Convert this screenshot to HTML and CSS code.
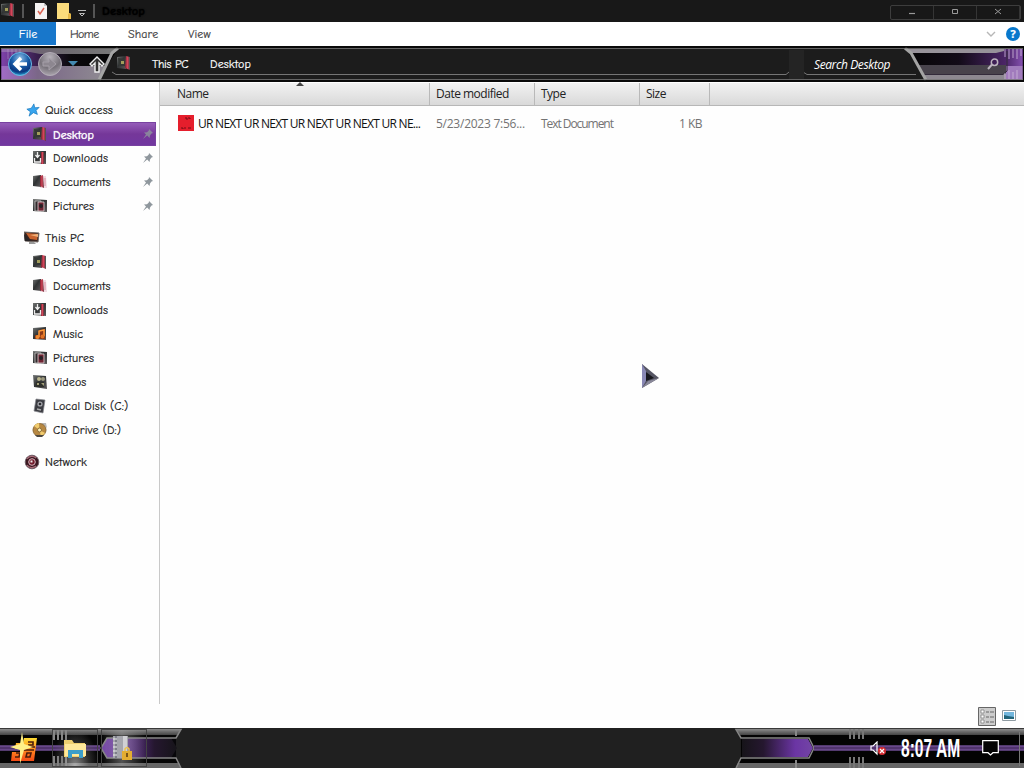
FILE: index.html
```html
<!DOCTYPE html>
<html lang="en" dir="ltr">
  <head>
    <meta charset="utf-8">
    <title>Desktop</title>
    <meta name="viewport" content="width=device-width, initial-scale=1.0">
    <link rel="stylesheet" href="styles.css">
  </head>
  <body>
    <svg class="defs" width="0" height="0">
      <defs>
        <linearGradient id="dark" x1="0" y1="0" x2="1" y2="1">
          <stop offset="0" stop-color="#747675"/>
          <stop offset=".45" stop-color="#303334"/>
          <stop offset="1" stop-color="#5d595b"/>
        </linearGradient>
        <linearGradient id="red" x1="0" y1="0" x2="1" y2="0">
          <stop offset="0" stop-color="#7e1c2c"/>
          <stop offset=".5" stop-color="#d2465a"/>
          <stop offset="1" stop-color="#5b3036"/>
        </linearGradient>
        <linearGradient id="bar" x1="0" y1="0" x2="0" y2="1">
          <stop offset="0" stop-color="#8a8a8a"/>
          <stop offset="1" stop-color="#444"/>
        </linearGradient>
        <linearGradient id="navTop" x1="0" y1="0" x2="1" y2="0">
          <stop offset="0" stop-color="#9a72b8"/>
          <stop offset=".3" stop-color="#777079"/>
          <stop offset="1" stop-color="#8d8d8d"/>
        </linearGradient>
        <linearGradient id="navLeft" x1="0" y1="0" x2="1" y2="0">
          <stop offset="0" stop-color="#7f43aa"/>
          <stop offset=".3" stop-color="#3a2050"/>
          <stop offset=".6" stop-color="#0b090c"/>
          <stop offset="1" stop-color="#050505"/>
        </linearGradient>
        <linearGradient id="navLow" x1="0" y1="0" x2="1" y2="0">
          <stop offset="0" stop-color="#a06cc6"/>
          <stop offset=".35" stop-color="#7b6788"/>
          <stop offset="1" stop-color="#8f8b92"/>
        </linearGradient>
        <linearGradient id="navRight" x1="0" y1="0" x2="1" y2="0">
          <stop offset="0" stop-color="#060606"/>
          <stop offset=".45" stop-color="#120b18"/>
          <stop offset=".85" stop-color="#4b2567"/>
          <stop offset="1" stop-color="#8550b0"/>
        </linearGradient>
        <linearGradient id="purple" x1="0" y1="0" x2="1" y2="0">
          <stop offset="0" stop-color="#161419"/>
          <stop offset=".3" stop-color="#25172f"/>
          <stop offset=".75" stop-color="#6b35a4"/>
          <stop offset="1" stop-color="#7345a5"/>
        </linearGradient>
        <radialGradient id="blue" cx=".5" cy=".25" r=".8">
          <stop offset="0" stop-color="#8dbbe5"/>
          <stop offset=".45" stop-color="#185da8"/>
          <stop offset=".75" stop-color="#0a3780"/>
          <stop offset="1" stop-color="#32c8f0"/>
        </radialGradient>
        <radialGradient id="grey" cx=".5" cy=".2" r=".8">
          <stop offset="0" stop-color="#b6b1b9"/>
          <stop offset=".6" stop-color="#77727a"/>
          <stop offset="1" stop-color="#aaa4ad"/>
        </radialGradient>
        <linearGradient id="fire" x1="0" y1="0" x2="0" y2="1">
          <stop offset="0" stop-color="#ffde35"/>
          <stop offset=".5" stop-color="#ff8a20"/>
          <stop offset="1" stop-color="#f44b16"/>
        </linearGradient>

        <symbol id="i-desktop" viewBox="0 0 16 16">
          <path d="M1 2 10 1V14L1 13z" fill="url(#dark)"/>
          <path d="M10 1 14 2V15L9 13z" fill="url(#red)"/>
          <path d="M2 3 9 4V11H3z" fill="#343735"/>
          <path d="M5 6h3v3H5z" fill="#a29d5b"/>
          <path d="M13.500 2v12" stroke="#555"/>
        </symbol>
        <symbol id="i-down" viewBox="0 0 16 16">
          <path d="M1 1H14V14L1 13z" fill="url(#dark)"/>
          <path d="M9 2h3v12H9z" fill="url(#red)"/>
          <path d="M5.500 2v5M3.500 5l2 2.500 2-2.500M2.500 8v4h6V8" fill="none" stroke="#eee" stroke-width="1.300"/>
        </symbol>
        <symbol id="i-doc" viewBox="0 0 16 16">
          <path d="M10 2h4l1 12H8z" fill="#f2dce3"/>
          <path d="M1 2 9 1V13L1 12z" fill="url(#dark)"/>
          <path d="M8 2 11 1 12 14 8 12z" fill="url(#red)"/>
          <path d="M13 4v8" stroke="#d993a4"/>
        </symbol>
        <symbol id="i-pic" viewBox="0 0 16 16">
          <path d="M1 1 15 2V14L1 13z" fill="url(#dark)"/>
          <path d="M3 3h6v10H3z" fill="#332a2d" stroke="#c9c8c6" stroke-width=".8"/>
          <path d="M6 4h6v9H6z" fill="#6e2432" stroke="#ddd4d4" stroke-width=".8"/>
          <circle cx="9" cy="8" r="2" fill="#252025"/>
        </symbol>
        <symbol id="i-music" viewBox="0 0 16 16">
          <path d="M1 2 14 1V14L1 13z" fill="url(#dark)"/>
          <path d="M7 4 13 3V13H3V9h4z" fill="#8c3817"/>
          <path d="M7 11V5l5-1v6" fill="none" stroke="#ff9b3a" stroke-width="1.500"/>
          <circle cx="5.500" cy="11" r="2" fill="#f18a31"/>
          <circle cx="10.500" cy="10.500" r="2" fill="#e07124"/>
        </symbol>
        <symbol id="i-video" viewBox="0 0 16 16">
          <path d="M1 1 14 2 15 15 2 13z" fill="url(#dark)"/>
          <circle cx="7" cy="5" r="2" fill="#b9b48b"/>
          <circle cx="11" cy="5" r="2" fill="#9a967c"/>
          <path d="M4 8h8v5H4z" fill="#2f302b"/>
          <path d="M5 9h2v2H5zM9 9h3v3z" fill="#a3a07b"/>
        </symbol>
        <symbol id="i-disk" viewBox="0 0 16 16">
          <path d="M4 1 13 2 11 15 2 13z" fill="#3b3c42" stroke="#87888e" stroke-width=".7"/>
          <circle cx="8" cy="6" r="2.600" fill="#a5a6ab"/>
          <circle cx="8" cy="6" r="1.300" fill="#292a2f"/>
          <path d="M5 11 9 12" stroke="#aaa" stroke-width="1.500"/>
        </symbol>
        <symbol id="i-cd" viewBox="0 0 16 16">
          <path d="M9 1h5l1 5z" fill="#b7b7b7"/>
          <circle cx="7.500" cy="8" r="6.500" fill="#b78842" stroke="#8d6a36"/>
          <path d="M7.500 8 2 4a7 7 0 0 1 5-3zM7.500 8l5.500 3-4 4z" fill="#f1cc6e"/>
          <circle cx="7.500" cy="8" r="2" fill="#fff1b5" stroke="#8b6c38"/>
          <path d="M3 13h9l-2 2H5z" fill="#4d4942"/>
        </symbol>
        <symbol id="i-pc" viewBox="0 0 16 16">
          <path d="M0 2 15 3 14 12 1 11z" fill="#3b2520" stroke="#706864"/>
          <path d="M2 3 14 4 13 10 6 9z" fill="#c9642f"/>
          <path d="M6 5 14 4V7z" fill="#efb27a"/>
          <path d="M0 4 7 11 1 11z" fill="#282426"/>
          <path d="M5 12h5l2 2H5z" fill="#999"/>
        </symbol>
        <symbol id="i-net" viewBox="0 0 16 16">
          <circle cx="8" cy="8" r="6.800" fill="#3c1821" stroke="#706069"/>
          <path d="M3 5a6 6 0 0 1 9-1M3 11a6 6 0 0 0 9 1" fill="none" stroke="#a96d79" stroke-width="1.200"/>
          <circle cx="8" cy="8" r="3.300" fill="#711c2c" stroke="#d9b6bf"/>
          <path d="M6.500 6.500h2v2h-2z" fill="#eee"/>
        </symbol>
        <symbol id="i-star" viewBox="0 0 16 16">
          <path d="M9 1 10 5.500 15 5 11.500 8.500 13 13 8.500 11 3.500 15 5 10 1 7 6 6z" fill="#38a5ee" stroke="#1879be" stroke-width=".8"/>
        </symbol>
        <symbol id="i-pin" viewBox="0 0 12 12">
          <path d="M7 1 11 5 9.500 5.500 8 7.500 7.500 10 5.200 7.600 1 11 4 6.500 2 4.500 5 4.200 6.800 2.500z" fill="#8f979d"/>
        </symbol>
      </defs>
    </svg>

    <div class="window">
      <header class="titlebar">
        <svg class="app-icon"><use href="#i-desktop"/></svg>
        <span class="sep"></span>
        <svg class="check" viewBox="0 0 12 16"><path d="M0 0h9l3 3v13H0z" fill="#f4f2f1"/><path d="M9 0v3h3" fill="#c7c7c7"/><path d="m3 8 2 3 4-6" fill="none" stroke="#dc6252" stroke-width="1.500"/></svg>
        <svg class="note" viewBox="0 0 14 16"><path d="M0 0h12v10l2 1v5H0z" fill="#fbdc7c"/><path d="M11 16v-5l1.500-1 1.500 1v5z" fill="#e5b847"/></svg>
        <svg class="custom" viewBox="0 0 8 7"><path d="M0 .5h8M1.500 3.500h5L4 6z" fill="none" stroke="#bbb"/></svg>
        <span class="sep second"></span>
        <span class="title comic">Desktop</span>
        <div class="controls">
          <span><svg viewBox="0 0 10 10"><path d="M2 6.500h6" stroke="#999" stroke-width="1.200"/></svg></span>
          <span><svg viewBox="0 0 10 10"><path d="M2.500 2.500h5v4h-5z" fill="none" stroke="#999"/></svg></span>
          <span><svg viewBox="0 0 10 10"><path d="m2 2 6 5M8 2 2 7" stroke="#999"/></svg></span>
        </div>
      </header>

      <nav class="ribbon comic">
        <span class="tab active">File</span>
        <span class="tab home">Home</span>
        <span class="tab share">Share</span>
        <span class="tab view">View</span>
        <svg class="chevron" viewBox="0 0 10 6"><path d="m1 1 4 4 4-4" fill="none" stroke="#b7b7b7" stroke-width="1.400"/></svg>
        <span class="help">?</span>
      </nav>

      <div class="address">
        <svg class="backdrop" viewBox="0 0 1024 36">
          <path d="M0 0h1024v36H0z" fill="#1c1c1c"/>
          <path d="M1 3H118L98 34H1z" fill="url(#navLeft)"/>
          <path d="M1 3H115L113 8H40L30 6H1z" fill="url(#navTop)" opacity=".85"/>
          <path d="M1 20H106L98 34H1z" fill="url(#navLow)"/>
          <path d="M118 2 112 7 99 34" fill="none" stroke="#a4a4a4" stroke-width="3"/>
          <path d="M8 3v10M12 3v8M16 3v10M20 3v7" stroke="#c4a5d8" opacity=".45"/>
          <path d="M112 26 116 28.500H786L789 26M803 26 807 28.500H916" fill="none" stroke="#757575"/>
          <path d="M789 4h15v29h-15z" fill="#242424"/>
          <path d="M906 3H1023V34H926z" fill="url(#navRight)"/>
          <path d="M908 3H1004V5L996 7H911z" fill="#97929a"/>
          <path d="M918 19H1006V28H923z" fill="#48434c"/>
          <path d="M923 28H1006V34H927z" fill="#8d8991"/>
          <path d="M1006 20H1023V34H1006z" fill="#a17bbd"/>
          <path d="M1007 5V25L1003 28.500H924" fill="none" stroke="#332b3b"/>
          <path d="M1005 3v8M1009 3v10M1013 3v9M1017 3v10M1021 3v7M1005 27v6M1009 24v9M1013 26v7M1017 24v9" stroke="#cbb6d9" stroke-width="1.300" opacity=".65"/>
          <path d="M905 2 911 7 926 34" fill="none" stroke="#a4a4a4" stroke-width="3"/>
          <path d="M0 1H1024M0 35H1024M.500 1V35M1023.500 1V35" stroke="#050505" stroke-width="1.500"/>
          <path d="M1 2.500H1023M1 33.500H1023" stroke="#777" stroke-width=".8"/>
        </svg>
        <div class="address-content">
          <svg class="back" viewBox="0 0 26 26"><circle cx="13" cy="13" r="11.500" fill="url(#blue)" stroke="#6dbce5"/><path d="m14 7-6 6 6 6M8 13h12" fill="none" stroke="#fff" stroke-width="3.500"/></svg>
          <svg class="forward" viewBox="0 0 26 26"><circle cx="13" cy="13" r="11.500" fill="url(#grey)" stroke="#b4adb8"/><path d="m12 7 7 6-7 6v-4H6v-4h6z" fill="#8d8790" stroke="#a59fa8"/></svg>
          <svg class="recent" viewBox="0 0 10 6"><path d="M0 0h10L5 5z" fill="#4489b0"/></svg>
          <svg class="up" viewBox="0 0 16 17"><path d="m8 1 7 7-2 2-3-3v9H6V7l-3 3-2-2z" fill="#333" stroke="#eee" stroke-width="1.400"/></svg>
          <svg class="place"><use href="#i-desktop"/></svg>
          <span class="crumb comic">This PC</span>
          <span class="crumb comic last">Desktop</span>
          <span class="search">Search Desktop</span>
          <svg class="lens" viewBox="0 0 12 12"><circle cx="7.500" cy="4.200" r="3.200" fill="none" stroke="#bbb3bd" stroke-width="1.500"/><path d="M5 6.500 1 11" stroke="#bbb3bd" stroke-width="2"/></svg>
        </div>
      </div>

      <div class="main">
        <aside class="sidebar comic">
          <div class="row root star"><svg><use href="#i-star"/></svg><span>Quick access</span></div>
          <div class="row selected"><svg><use href="#i-desktop"/></svg><span>Desktop</span><svg class="pin"><use href="#i-pin"/></svg></div>
          <div class="row"><svg><use href="#i-down"/></svg><span>Downloads</span><svg class="pin"><use href="#i-pin"/></svg></div>
          <div class="row"><svg><use href="#i-doc"/></svg><span>Documents</span><svg class="pin"><use href="#i-pin"/></svg></div>
          <div class="row"><svg><use href="#i-pic"/></svg><span>Pictures</span><svg class="pin"><use href="#i-pin"/></svg></div>
          <div class="row root group"><svg><use href="#i-pc"/></svg><span>This PC</span></div>
          <div class="row"><svg><use href="#i-desktop"/></svg><span>Desktop</span></div>
          <div class="row"><svg><use href="#i-doc"/></svg><span>Documents</span></div>
          <div class="row"><svg><use href="#i-down"/></svg><span>Downloads</span></div>
          <div class="row"><svg><use href="#i-music"/></svg><span>Music</span></div>
          <div class="row"><svg><use href="#i-pic"/></svg><span>Pictures</span></div>
          <div class="row"><svg><use href="#i-video"/></svg><span>Videos</span></div>
          <div class="row"><svg><use href="#i-disk"/></svg><span>Local Disk (C:)</span></div>
          <div class="row"><svg><use href="#i-cd"/></svg><span>CD Drive (D:)</span></div>
          <div class="row root group"><svg><use href="#i-net"/></svg><span>Network</span></div>
        </aside>
        <section class="files">
          <div class="columns head">
            <span class="name">Name</span><span>Date modified</span><span>Type</span><span>Size</span>
            <i class="sort"></i>
          </div>
          <div class="columns file">
            <span class="name">
              <svg class="file-icon" viewBox="0 0 16 16"><path d="M0 0h16v16H0z" fill="#e51e2c"/><path d="M7 3h2v2M10 3h2v1M3 13h2v1M6 13h2M10 13h3" fill="none" stroke="#710c14"/></svg>
              <b>UR NEXT UR NEXT UR NEXT UR NEXT UR NE...</b>
            </span>
            <span class="modified">5/23/2023 7:56...</span><span class="type">Text Document</span><span class="size">1 KB</span>
          </div>
          <div class="views">
            <svg class="details" viewBox="0 0 18 19"><path d="M.5.5h17v18H.5z" fill="#ccc" stroke="#666"/><path d="M3 3h3v3H3zM3 8h3v3H3zM3 13h3v3H3z" fill="#fff" stroke="#777" stroke-width=".7"/><path d="M8 5h3m1 0h4M8 10h3m1 0h4M8 15h3m1 0h4" stroke="#666"/></svg>
            <svg class="thumbs" viewBox="0 0 14 11"><path d="M.5.500h13v10H.5z" fill="#fff" stroke="#8f9ba2"/><path d="M2 2h10v7H2z" fill="#72b6dd"/><path d="m2 5 4 1 6 1v2H2z" fill="#21647a"/></svg>
          </div>
        </section>
      </div>

      <footer class="taskbar">
        <svg class="backdrop" viewBox="0 0 1024 40">
          <path d="M0 0h1024v40H0z" fill="#202020"/>
          <path d="M0 1H181L176 10V30L181 40H0z" fill="#050505"/>
          <path d="M0 1H181L178 7H0z" fill="url(#bar)"/>
          <path d="M0 35H179L181 40H0z" fill="#666"/>
          <path d="M0 20H102" stroke="#51346e" stroke-width="5"/>
          <path d="M0 18H102M0 22H102" stroke="#7e5aa5"/>
          <path d="M101 20 107 10H176V30H107z" fill="url(#purple)" transform="matrix(-1 0 0 1 277 0)"/>
          <path d="M101 20 107 10H176V30H107z" fill="#08070a"/>
          <path d="M0 20 6 10H75V30H6z" fill="url(#purple)" transform="matrix(-1 0 0 1 177 0)"/>
          <path d="M101 20 107 10V30z" fill="#7345a5"/>
          <path d="M100 10 107 10 101 20 107 30 100 30z" fill="#050505"/>
          <path d="M0 1.500H181L176 10H107L101 20 107 30H176L181 40" fill="none" stroke="#858585" stroke-width="1.500"/>
          <path d="M736 1H1024V40H736L741 30V10z" fill="#030303"/>
          <path d="M736 1H1024V7H740z" fill="url(#bar)"/>
          <path d="M738 35H1024V40H736z" fill="#666"/>
          <path d="M1024 1.500H736L741 10H809L814 20L809 30H741L736 40" fill="none" stroke="#858585" stroke-width="1.500"/>
          <path d="M742 11H808L813 20 808 29H742z" fill="url(#purple)"/>
          <path d="M814 20H1024" stroke="#51346e" stroke-width="5"/>
          <path d="M814 18H1024M814 22H1024" stroke="#7e5aa5"/>
          <path d="M850 1v10M854 1v10M859 1v10M863 1v10M850 29v11M854 29v11M859 29v11M863 29v11" stroke="#777" stroke-width="2"/>
          <path d="M796 1v7M796 32v8" stroke="#888" stroke-width="2"/>
          <path d="M1019.500 4v34" stroke="#777"/>
        </svg>
        <div class="task-content">
          <svg class="start" viewBox="0 0 28 32">
            <path d="M14 6h13l-3 23H1l1-9h8v-3H5l1-6h7z" fill="url(#fire)"/>
            <path d="M18 10h5v3h-5M12 18h12M6 21h4l-1 4H5M17 21h4l-1 4h-4zM16 15h9" fill="none" stroke="#4a1c0c" stroke-width="1.600"/>
            <path d="M12 0 14 12 23 15 14 18 10 32 10 18 0 15 10 12z" fill="#fff08a"/>
          </svg>
          <div class="task explorer">
            <svg viewBox="0 0 24 20"><path d="M1 2h8l2 3h11v14H1z" fill="#efcf70"/><path d="M2 6h21v12H2z" fill="#ffe89a"/><path d="M5 20v-8h15v8h-4v-4H9v4z" fill="#3c9ec9"/></svg>
          </div>
          <div class="task archive">
            <svg viewBox="0 0 22 26"><path d="M2 1h15v22H2z" fill="#a5a6ad"/><path d="M12 1h4v22h-4z" fill="#d0d0d4"/><path d="M5 1v22" stroke="#7c7e88" stroke-width="2"/><path d="M2 4h4M2 8h4M2 12h4M2 16h4M2 20h4" stroke="#eee"/><path d="M14 17v-3q2-3 4 0v3" fill="none" stroke="#edc24e" stroke-width="1.500"/><path d="M11 16h10v9H11z" fill="#e3ad32"/><path d="M15 18h2v4h-2z" fill="#7a5517"/></svg>
          </div>
          <div class="tray">
            <svg class="volume" viewBox="0 0 17 15"><path d="M1 5h2l4-4v12L3 9H1z" fill="none" stroke="#fff" stroke-width="1.200"/><circle cx="12" cy="10" r="4" fill="#d32b31"/><path d="m10 8 4 4m0-4-4 4" stroke="#fff" stroke-width="1.200"/></svg>
            <span class="clock"><span>8:07 AM</span></span>
            <svg class="message" viewBox="0 0 17 16"><path d="M.7.700h15.600v12H11L8.500 15 6 12.700H.7z" fill="#030303" stroke="#fff" stroke-width="1.200"/></svg>
          </div>
        </div>
      </footer>

      <svg class="cursor" viewBox="0 0 20 26"><path d="M1 1 18 15 1 25z" fill="#555563"/><path d="M1 1v24l5-9-1-8z" fill="#8988b5"/><path d="m5 9 8 6-8 3z" fill="#17171d"/><path d="M1 25 18 15 7 18z" fill="#8a899a"/></svg>
    </div>
  </body>
</html>
```

FILE: styles.css
```css
*{
    margin: 0;
    padding: 0;
    box-sizing: border-box;
}
body{
    width: 1024px;
    height: 768px;
    overflow: hidden;
    font-family: "Open Sans", "Noto Sans", sans-serif;
    font-size: 12px;
    color: #222;
}
svg{
    display: block;
    flex: none;
}
.defs{
    position: absolute;
}
.comic{
    font-family: "Comic Sans MS", "Comic Neue", Lato, sans-serif;
    font-size: 12px;
    letter-spacing: 0.1px;
    -webkit-text-stroke: 0.2px;
}
.window{
    position: relative;
    height: 768px;
    display: flex;
    flex-direction: column;
    background: #fefefe;
}
.titlebar{
    height: 22px;
    background: #181818;
    display: flex;
    align-items: center;
}
.app-icon{
    width: 16px;
    height: 16px;
    margin-left: 0;
    margin-bottom: 3px;
}
.sep{
    width: 2px;
    height: 14px;
    background: #555;
    margin-left: 6px;
}
.check{
    width: 12px;
    height: 16px;
    margin-left: 11px;
}
.note{
    width: 14px;
    height: 16px;
    margin-left: 10px;
}
.custom{
    width: 8px;
    height: 7px;
    margin: 4px 0 0 7px;
}
.sep.second{
    margin-left: 7px;
}
.title{
    font-weight: bold;
    font-size: 12.5px;
    margin-left: 7px;
    color: #000;
    text-shadow: 0 0 2px #000;
}
.controls{
    display: flex;
    width: 131px;
    height: 15px;
    margin: 3px 3px 0 auto;
    border: 1px solid #3d3d3d;
    border-radius: 2px;
}
.controls span{
    flex: 1;
    display: flex;
    align-items: center;
    justify-content: center;
    border-right: 1px solid #353535;
}
.controls svg{
    width: 10px;
    height: 10px;
    margin-bottom: 2px;
}
.ribbon{
    height: 24px;
    display: flex;
    align-items: center;
    background: #fff;
    color: #444;
    padding-right: 4px;
}
.tab{
    line-height: 24px;
}
.tab.active{
    width: 56px;
    height: 23px;
    align-self: flex-start;
    text-align: center;
    color: #fff;
    background: #1877cb;
}
.home{
    margin-left: 14px;
    width: 58px;
    letter-spacing: -0.6px;
}
.share{
    width: 60px;
}
.chevron{
    width: 10px;
    height: 6px;
    margin-left: auto;
}
.help{
    width: 14px;
    height: 14px;
    margin-left: 10px;
    border-radius: 50%;
    background: #0878cc;
    color: #fff;
    font: bold 11px/14px "Open Sans", sans-serif;
    letter-spacing: 0;
    text-align: center;
}
.address, .taskbar{
    position: relative;
}
.address{
    height: 36px;
}
.backdrop{
    position: absolute;
    top: 0;
    left: 0;
    width: 100%;
    height: 100%;
}
.address-content{
    position: relative;
    height: 36px;
    display: flex;
    align-items: center;
    color: #fff;
}
.back, .forward{
    width: 26px;
    height: 26px;
    margin-left: 7px;
}
.forward{
    margin-left: 4px;
}
.recent{
    width: 10px;
    height: 6px;
    margin-left: 5px;
}
.up{
    width: 16px;
    height: 17px;
    margin-left: 11px;
}
.place{
    width: 16px;
    height: 16px;
    margin: 0 0 3px 11px;
}
.crumb{
    width: 58px;
    margin-left: 20px;
}
.crumb:not(.last){
    letter-spacing: -0.3px;
}
.crumb.last{
    margin-left: 0;
}
.search{
    font-style: italic;
    letter-spacing: -0.4px;
    margin-left: 546px;
    width: 90px;
    white-space: nowrap;
}
.lens{
    width: 12px;
    height: 12px;
    margin-left: auto;
    margin-right: 25px;
}
.main{
    height: 646px;
    display: flex;
}
.sidebar{
    width: 160px;
    height: 622px;
    padding-top: 16px;
    border-right: 1px solid #c9c9c9;
}
.row{
    height: 24px;
    width: 156px;
    padding-left: 32px;
    display: flex;
    align-items: center;
    color: #191919;
    white-space: nowrap;
}
.row svg{
    width: 16px;
    height: 16px;
    margin-right: 5px;
}
.row.root{
    padding-left: 24px;
}
.row.star{
    padding-left: 26px;
}
.row.star svg{
    width: 14px;
    height: 14px;
}
.row.group{
    margin-top: 8px;
}
.row.selected{
    color: #fff;
    background: linear-gradient(#955cb9, #753799 50%, #7137a0);
    border: 1px solid #7842a0;
    border-left: 0;
    text-shadow: 0 0 1px #fff;
}
.row.selected span{
    padding-top: 1px;
}
.row .pin{
    width: 12px;
    height: 12px;
    margin: 0 2px 0 auto;
}
.row.selected .pin{
    margin-right: 1px;
    opacity: 0.8;
}
.files{
    flex: 1;
    display: flex;
    flex-direction: column;
}
.columns{
    display: grid;
    grid-template-columns: 270px 105px 105px 70px;
    letter-spacing: -0.5px;
    white-space: nowrap;
}
.columns span{
    padding-left: 6px;
}
.columns .name{
    padding-left: 17px;
}
.head{
    position: relative;
    height: 24px;
    line-height: 22px;
    background: linear-gradient(#f2f2f2, #d9d9d9);
    border-bottom: 1px solid #b7b7b7;
    border-top: 1px solid #fff;
}
.head span{
    height: 22px;
    border-right: 1px solid #b9b9b9;
}
.sort{
    position: absolute;
    left: 136px;
    top: -1px;
    border: 4px solid transparent;
    border-top: 0;
    border-bottom-color: #444;
}
.file{
    height: 36px;
    line-height: 36px;
    color: #737373;
}
.file .name{
    display: flex;
    align-items: center;
    padding-left: 18px;
    color: #111;
}
.file-icon{
    width: 16px;
    height: 16px;
    margin: 0 4px 3px 0;
}
.file b{
    font-weight: normal;
    letter-spacing: -0.72px;
}
.file .modified{
    letter-spacing: -0.25px;
}
.file .type{
    letter-spacing: -1.05px;
}
.file .size{
    text-align: right;
    padding-right: 8px;
}
.views{
    margin: auto 8px 2px auto;
    display: flex;
    align-items: center;
    gap: 6px;
}
.details{
    width: 18px;
    height: 19px;
}
.thumbs{
    width: 14px;
    height: 11px;
    margin-bottom: 2px;
}
.taskbar{
    height: 40px;
}
.task-content{
    position: relative;
    height: 40px;
    display: flex;
    align-items: center;
}
.start{
    width: 28px;
    height: 32px;
    margin-left: 10px;
}
.task{
    width: 46px;
    height: 38px;
    display: flex;
    align-items: center;
    justify-content: center;
    border: 1px solid #444;
}
.explorer{
    margin-left: 14px;
    background: radial-gradient(ellipse at 50% 100%, #ddd9, #6666 45%, transparent 75%), repeating-linear-gradient(90deg, #888 0 2px, transparent 2px 4px) 0 0 / 15px 10px no-repeat, repeating-linear-gradient(90deg, #888 0 2px, transparent 2px 4px) 0 100% / 15px 10px no-repeat;
}
.explorer svg{
    width: 24px;
    height: 20px;
}
.archive{
    margin-left: 3px;
    background: linear-gradient(90deg, transparent, #aaa7 45%, transparent);
}
.archive svg{
    width: 22px;
    height: 26px;
    margin-right: 4px;
}
.tray{
    margin-left: auto;
    display: flex;
    align-items: center;
}
.volume{
    width: 17px;
    height: 15px;
}
.clock{
    width: 60px;
    margin-left: 14px;
    color: #fff;
    font: bold 26px/38px "Liberation Sans Narrow", "Liberation Sans", sans-serif;
    white-space: nowrap;
}
.clock span{
    display: inline-block;
    transform: scaleX(0.6);
    transform-origin: left;
}
.message{
    width: 17px;
    height: 16px;
    margin: 0 25px 0 21px;
}
.cursor{
    position: absolute;
    left: 641px;
    top: 363px;
    width: 20px;
    height: 26px;
}
```
